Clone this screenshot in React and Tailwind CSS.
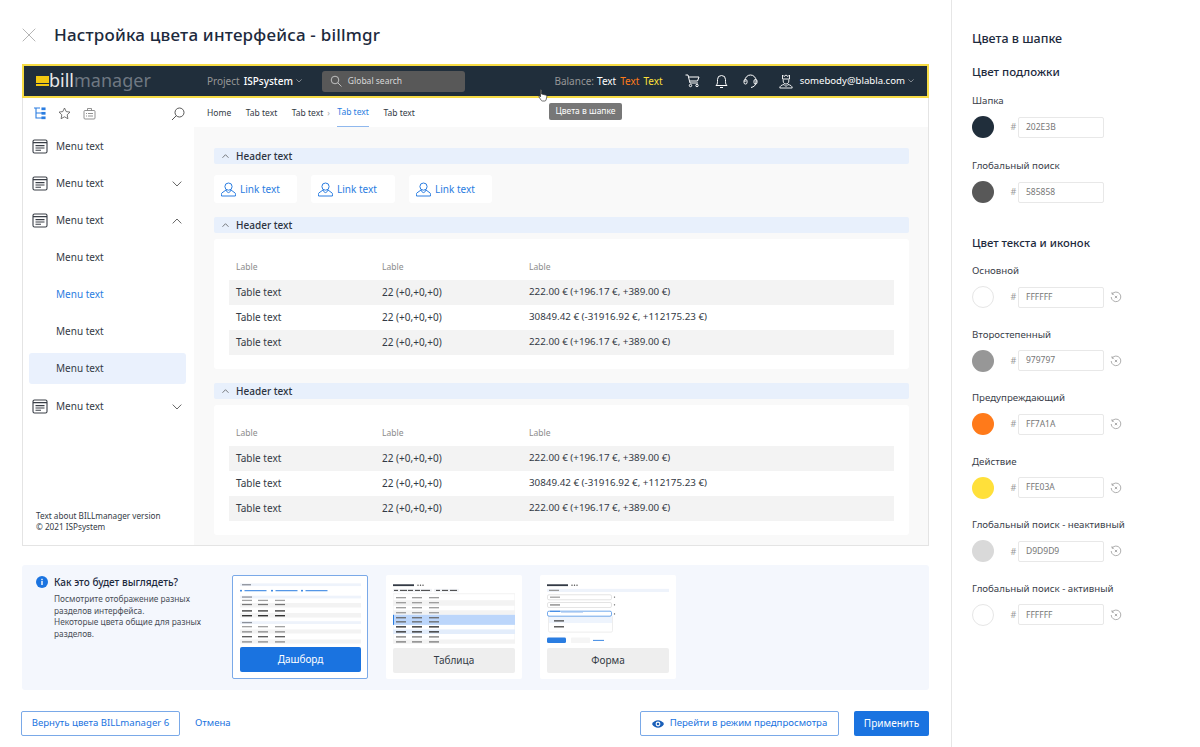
import React from "react";

const F = { fontFamily: '"Noto Sans", "Open Sans", sans-serif' };

const MenuIcon = () => (
  <svg width="16" height="15" viewBox="0 0 16 15" fill="none" stroke="#3a3f47" strokeWidth="1.1" className="shrink-0">
    <rect x="1" y="1" width="14" height="13" rx="1.5" />
    <path d="M1 3.6h14M3.5 6.6h9M3.5 9h9M3.5 11.2h5.5" />
  </svg>
);
const Chev = ({ up, c = "#555", w = 10 }) => (
  <svg width={w} height={w * 0.6} viewBox="0 0 10 6" fill="none" stroke={c} strokeWidth="0.9" className="shrink-0">
    <path d={up ? "M.7 5.4 5 1l4.3 4.4" : "M.7.6 5 5l4.3-4.4"} />
  </svg>
);
const UserIcon = () => (
  <svg width="15" height="15" viewBox="0 0 15 15" fill="none" stroke="#2a7de1" strokeWidth="1" className="shrink-0">
    <circle cx="7.5" cy="4.6" r="3.6" />
    <path d="M5 8 .8 11c-.4.4-.4 1-.3 3h13.900c.2-2 .1-2.600-.3-3L10 8c-.6 1.500-1.500 2.600-2.500 2.600S5.600 9.500 5 8Z" />
  </svg>
);
const Reset = () => (
  <svg width="12" height="12" viewBox="0 0 12 12" fill="none" stroke="#9a9a9a" strokeWidth="0.8" className="shrink-0">
    <path d="M2 3.200A4.800 4.800 0 1 1 1.200 6M2 1.200v2h2M4.800 4.800l2.400 2.400M7.200 4.800 4.800 7.200" />
  </svg>
);

const Menu = ({ chev, up, children }) => (
  <div className="h-[37px] flex items-center pl-[9px] pr-[12px] gap-[8px]">
    <MenuIcon />
    <span className="flex-1 text-[10px] text-[#333a45]">{children}</span>
    {chev && <Chev up={up} />}
  </div>
);
const Sub = ({ children, blue, active }) => (
  <div className="h-[37px] py-[3px] pl-[6px] pr-[8px]">
    <div className={`h-[31px] flex items-center pl-[27px] rounded-[3px] text-[10px] ${blue ? "text-[#2a7de1]" : "text-[#333a45]"} ${active ? "bg-[#eaf1fd]" : ""}`}>
      {children}
    </div>
  </div>
);

const Head = ({ children }) => (
  <div className="h-[16px] bg-[#e8f0fc] rounded-[2px] flex items-center pl-[8px] gap-[7px] text-[10px] font-medium text-[#2c3340]">
    <Chev up c="#333" w={7} />
    {children}
  </div>
);
const LinkCard = ({ w }) => (
  <div className="h-[28px] bg-white rounded-[3px] flex items-center pl-[7px] gap-[4px] text-[10px] text-[#2a7de1]" style={{ width: w }}>
    <UserIcon />
    Link text
  </div>
);
const Row = ({ a, b, c, gray }) => (
  <div className={`h-[25px] flex items-center pl-[7px] text-[10px] text-[#333a45] ${gray ? "bg-[#f3f3f3]" : ""}`}>
    <span className="w-[146px]">{a}</span>
    <span className="w-[147px]">{b}</span>
    <span className="text-[9.800px]">{c}</span>
  </div>
);
const TableCard = () => (
  <div className="bg-white rounded-[3px] h-[130px] mt-[6px] px-[15px] pt-[21px]">
    <div className="h-[20px] flex items-start pl-[7px] text-[8.500px] leading-[14px] text-[#8b8b8b]">
      <span className="w-[146px]">Lable</span>
      <span className="w-[147px]">Lable</span>
      <span>Lable</span>
    </div>
    <Row gray a="Table text" b="22 (+0,+0,+0)" c="222.00 € (+196.17 €, +389.00 €)" />
    <Row a="Table text" b="22 (+0,+0,+0)" c="30849.42 € (-31916.92 €, +112175.23 €)" />
    <Row gray a="Table text" b="22 (+0,+0,+0)" c="222.00 € (+196.17 €, +389.00 €)" />
  </div>
);

const Swatch = ({ label, color, value, reset, border, tall }) => (
  <div className={tall ? "h-[65px]" : "h-[63.600px]"}>
    <div className="text-[9.700px] leading-[14px] text-[#3a404a]">{label}</div>
    <div className="flex items-center mt-[8px]">
      <span className={`w-[22px] h-[22px] rounded-full shrink-0 ${border ? "border border-[#e6e6e6]" : ""}`} style={{ background: color }} />
      <span className="ml-[15px] w-[9px] text-center text-[9px] text-[#9a9a9a]">#</span>
      <div className="w-[86px] h-[21px] rounded-[2px] border border-[#e8e8e8] flex items-center pl-[7px] text-[8.500px] text-[#777]">{value}</div>
      {reset && <span className="ml-[6px] flex"><Reset /></span>}
    </div>
  </div>
);

const lines3 = (y, c) => [3, 19, 36].map((x) => <rect key={x + "-" + y} x={x} y={y} width="10" height="1.400" fill={c} />);
const lines3d = (y, c) => [2, 18, 35].map((x) => <rect key={x + "-" + y} x={x} y={y} width="10" height="1.400" fill={c} />);
const Dots = () => (
  <g>
    <rect x="0" y="2.500" width="21" height="2" fill="#333a45" />
    <circle cx="25" cy="3.500" r=".7" fill="#333" /><circle cx="27.500" cy="3.500" r=".7" fill="#333" /><circle cx="30" cy="3.500" r=".7" fill="#333" />
  </g>
);

const ThumbDash = () => (
  <svg width="121" height="62" viewBox="0 0 121 68" preserveAspectRatio="none" className="block">
    <rect x="0" y="1.500" width="121" height="3" fill="#eef3fb" /><rect x="2" y="2.300" width="9" height="1.400" fill="#8c919a" />
    {[[1, 22], [32, 22], [62, 22]].map(([x, w]) => (
      <g key={x}><circle cx={x} cy="9.500" r="1" fill="#2a7de1" /><rect x={x + 3.5} y="9" width={w} height="1.100" fill="#2a7de1" /></g>
    ))}
    <rect x="0" y="15" width="121" height="3" fill="#eef3fb" /><rect x="2" y="15.800" width="10" height="1.400" fill="#8c919a" />
    <rect y="23" width="121" height="5" fill="#f3f3f3" /><rect y="34" width="121" height="5" fill="#f3f3f3" />
    {lines3d(19.500, "#a0a0a0")}{lines3d(24, "#777")}{lines3d(31, "#333")}{lines3d(36.300, "#222")}
    <rect x="0" y="43" width="121" height="3" fill="#eef3fb" /><rect x="2" y="43.800" width="10" height="1.400" fill="#8c919a" />
    <rect y="52" width="121" height="4.500" fill="#f3f3f3" /><rect y="63" width="121" height="4.500" fill="#f3f3f3" />
    {lines3d(48.300, "#a0a0a0")}{lines3d(54, "#888")}{lines3d(59.300, "#555")}{lines3d(65, "#888")}
  </svg>
);
const ThumbTable = () => (
  <svg width="122" height="62" viewBox="0 0 122 68" preserveAspectRatio="none" className="block">
    <Dots />
    <rect x="0" y="7.500" width="39" height="3.500" fill="#f1f3f6" /><rect x="41" y="7.500" width="25" height="3.500" fill="#f1f3f6" />
    <path d="M1 9.200h4M7 9.200h7M15 9.200h5M22 9.200h5M28 9.200h9M43 9.200h4M49 9.200h6M57 9.200h7" stroke="#333" strokeWidth="1" />
    <rect y="13" width="122" height="54" fill="#fff" stroke="#e8e8e8" strokeWidth=".6" />
    <rect y="20" width="122" height="6" fill="#f3f3f3" /><rect y="31" width="122" height="5" fill="#f3f3f3" />
    <rect y="36" width="122" height="11" fill="#bcd6fb" />
    <rect y="52" width="122" height="5" fill="#e3edfb" /><rect y="63" width="122" height="4" fill="#f3f3f3" />
    <rect y="36" width="1" height="11" fill="#2a7de1" />
    {[16.500, 22, 27.500, 33].map((y) => <g key={y}>{lines3(y, "#999")}</g>)}
    {[38.500, 43].map((y) => <g key={y}>{lines3(y, "#666")}</g>)}
    {[48.500, 54].map((y) => <g key={y}>{lines3(y, "#222")}</g>)}
    {[59.500, 65].map((y) => <g key={y}>{lines3(y, "#777")}</g>)}
  </svg>
);
const ThumbForm = () => (
  <svg width="122" height="62" viewBox="0 0 122 68" preserveAspectRatio="none" className="block">
    <Dots />
    <rect x="0" y="7.500" width="122" height="3.500" fill="#eef3fb" /><rect x="2" y="8.500" width="10" height="1.400" fill="#999" />
    <rect x=".5" y="14" width="64" height="5.500" rx="1.500" fill="#fff" stroke="#cfcfcf" strokeWidth=".6" /><rect x="3" y="16" width="10" height="1.300" fill="#999" />
    <rect x=".5" y="22.500" width="64" height="5.500" rx="1.500" fill="#fff" stroke="#cfcfcf" strokeWidth=".6" /><rect x="3" y="24.500" width="10" height="1.300" fill="#777" />
    <circle cx="67.500" cy="16.500" r=".7" fill="#555" /><circle cx="67.500" cy="25" r=".7" fill="#555" /><circle cx="67.500" cy="35" r=".7" fill="#555" />
    <rect x="1.500" y="37" width="64" height="18" rx="1.500" fill="#fff" stroke="#ececec" strokeWidth="1" />
    <rect x="2" y="38" width="63" height="7" fill="#eef4fd" />
    <rect x="7" y="42" width="10" height="1.300" fill="#333" /><rect x="7" y="48.500" width="10" height="1.300" fill="#333" />
    <rect x=".5" y="32" width="64" height="5.500" rx="1.500" fill="#fff" stroke="#2a7de1" strokeWidth=".7" />
    <rect x="3" y="31.600" width="10" height="1" fill="#2a7de1" /><rect x="14" y="32.800" width="22" height=".8" fill="#a8c6f0" />
    <rect x="0" y="61" width="19" height="6" rx="1.500" fill="#2a7de1" /><rect x="24" y="61" width="19" height="6" rx="1" fill="#f5f5f5" /><rect x="46" y="63.500" width="11" height="1" fill="#2a7de1" />
  </svg>
);

const Thumb = ({ label, active, children }) => (
  <div className={`w-[136px] h-[104px] bg-white rounded-[2px] flex flex-col pb-[6px] ${active ? "border border-[#7aa9e8] pl-[7px] pr-[6px] pt-[6px] pb-[5px]" : "p-[7px] pb-[6px]"}`}>
    <div className="h-[62px] overflow-hidden">{children}</div>
    <div className={`mt-auto h-[25px] rounded-[2px] flex items-center justify-center text-[10px] ${active ? "bg-[#1a73e0] text-white" : "bg-[#eeeeee] text-[#333a45]"}`}>{label}</div>
  </div>
);

export default function App() {
  return (
    <div className="w-[1200px] h-[747px] overflow-hidden flex bg-white relative" style={F}>
      <div className="w-[952px] border-r border-[#e6e6e6] pl-[22px] pr-[22px] flex flex-col shrink-0">
        <div className="h-[64px] flex items-center pt-[6px]">
          <svg width="14" height="14" viewBox="0 0 14 14" stroke="#b5b5b5" strokeWidth="1" fill="none"><path d="M.7.7l12.600 12.600M13.300.7.7 13.300" /></svg>
          <h1 className="ml-[18px] text-[17px] font-medium text-[#1d2a3d] tracking-[0.2px]">Настройка цвета интерфейса - billmgr</h1>
        </div>

        <div className="h-[482px] border border-[#e4e4e4] border-t-0 flex flex-col relative">
          <div className="h-[34px] -ml-[1px] -mr-[1px] border-2 border-[#f7dc45] bg-[#202e3b] flex items-center shrink-0 text-[10px]">
            <span className="ml-[12px] w-[13px] h-[10px] flex flex-col justify-between shrink-0">
              <span className="h-[7px] bg-[#f2c811]" /><span className="h-[2px] bg-[#f2c811]" />
            </span>
            <span className="w-[102px] text-[18px] leading-none -mt-[2px]"><span className="text-[#e8e8e8]">bill</span><span className="text-[#6f7882]">manager</span></span>
            <span className="ml-[56px] text-[#979797]">Project</span>
            <span className="ml-[4px] text-white font-medium">ISPsystem</span>
            <span className="ml-[3px]"><Chev c="#ddd" w={6} /></span>
            <div className="ml-[20px] w-[143px] h-[21px] rounded-[3px] bg-[#585858] flex items-center pl-[8px] gap-[6px] text-[8.500px] text-[#d9d9d9]">
              <svg width="12" height="12" viewBox="0 0 12 12" fill="none" stroke="#d9d9d9" strokeWidth=".8"><circle cx="5" cy="5" r="3.800" /><path d="m8 8 3.500 3.500" /></svg>
              Global search
            </div>
            <span className="ml-auto text-[#979797]">Balance:</span>
            <span className="ml-[3px] text-white">Text</span>
            <span className="ml-[4px] text-[#ff7a1a]">Text</span>
            <span className="ml-[4px] text-[#ffe03a]">Text</span>
            <svg className="ml-[22px]" width="15" height="14" viewBox="0 0 15 14" fill="none" stroke="#fff" strokeWidth="1"><path d="M.5 1h2.500l2 8h8M3.500 3h10.500l-1.500 4H5" /><circle cx="5.500" cy="11.500" r="1.200" /><circle cx="12" cy="11.500" r="1.200" /></svg>
            <svg className="ml-[15px]" width="13" height="15" viewBox="0 0 13 15" fill="none" stroke="#fff" strokeWidth="1"><path d="M1 11.500c1.200-1 1.500-2 1.500-4V5.500a4 4 0 0 1 8 0v2c0 2 .3 3 1.500 4ZM5 13.500h3" /></svg>
            <svg className="ml-[15px]" width="15" height="15" viewBox="0 0 15 15" fill="none" stroke="#fff" strokeWidth="1"><path d="M2 8V6.500a5.500 5.500 0 0 1 11 0V8c0 3-2 5-5 5.500" /><rect x="1" y="5.500" width="3" height="4.500" rx="1.400" /><rect x="11" y="5.500" width="3" height="4.500" rx="1.400" /></svg>
            <svg className="ml-[21px]" width="14" height="15" viewBox="0 0 14 15" fill="none" stroke="#fff" strokeWidth=".9"><path d="M3.500 1 5 2.500 7 1l2 1.500L10.500 1v4h-7ZM4.200 5.500v1.500c0 2 1.200 3 2.800 3s2.800-1 2.800-3V5.500M.8 14c0-2 1.700-3 4.200-3.500l2 2 2-2c2.500.5 4.200 1.500 4.200 3.500Z" /></svg>
            <span className="ml-[7px] text-white text-[9.600px]">somebody@blabla.com</span>
            <span className="ml-[3px] mr-[13px]"><Chev c="#ddd" w={6} /></span>
          </div>

          <div className="flex flex-1 min-h-0">
            <aside className="w-[171px] shrink-0 flex flex-col bg-white">
              <div className="h-[29px] mt-[1px] flex items-center pl-[10px] pr-[9px]">
                <svg width="13" height="14" viewBox="0 0 13 14" fill="none" stroke="#2a7de1" strokeWidth="1.100"><path d="M1 1h6M3 1v10h6M3 6h6" /><rect x="9" y="1" width="3" height="1.600" fill="#2a7de1" /><rect x="9" y="5.500" width="3" height="1.600" fill="#2a7de1" /><rect x="9" y="10" width="3" height="1.600" fill="#2a7de1" /></svg>
                <svg className="ml-[12px]" width="13" height="13" viewBox="0 0 13 13" fill="none" stroke="#555" strokeWidth=".8"><path d="m6.500 1 1.700 3.600 3.800.5-2.800 2.700.7 3.900-3.400-1.900-3.400 1.900.7-3.900L1 5.100l3.800-.5Z" /></svg>
                <svg className="ml-[12px]" width="13" height="13" viewBox="0 0 13 13" fill="none" stroke="#777" strokeWidth=".8"><rect x="1" y="3.500" width="11" height="8.500" rx="1" /><path d="M4.500 3.500V1.500h4v2M3 6.500h1M5 6.500h5M3 9h1M5 9h5" /></svg>
                <svg className="ml-auto" width="14" height="14" viewBox="0 0 14 14" fill="none" stroke="#444" strokeWidth=".9"><circle cx="8.500" cy="5.500" r="4.500" /><path d="M5.300 8.700 1 13" /></svg>
              </div>
              <div>
                <Menu>Menu text</Menu>
                <Menu chev>Menu text</Menu>
                <Menu chev up>Menu text</Menu>
                <Sub>Menu text</Sub>
                <Sub blue>Menu text</Sub>
                <Sub>Menu text</Sub>
                <Sub active>Menu text</Sub>
                <div className="h-px" />
                <Menu chev>Menu text</Menu>
              </div>
              <div className="mt-auto pl-[13px] pb-[13px] text-[8.200px] leading-[10.500px] text-[#333a45]">
                Text about BILLmanager version<br />© 2021 ISPsystem
              </div>
            </aside>
            <main className="flex-1 min-w-0 bg-[#f9f9f9] flex flex-col">
              <div className="h-[29px] bg-white flex items-stretch pl-[13px] pt-[1px] gap-[14.500px] text-[8.500px] text-[#333a45] shrink-0">
                <span className="flex items-center">Home</span>
                <span className="flex items-center">Tab text</span>
                <span className="flex items-center">Tab text<span className="ml-[4px] text-[#aaa]">›</span></span>
                <span className="flex items-center text-[#2a7de1] border-b border-[#8fb8ee] -ml-[7px]">Tab text</span>
                <span className="flex items-center">Tab text</span>
              </div>
              <div className="pl-[20px] pr-[19px] pt-[21px]">
                <Head>Header text</Head>
                <div className="flex gap-[14px] mt-[11px] mb-[14px]">
                  <LinkCard w={83} /><LinkCard w={84} /><LinkCard w={83} />
                </div>
                <Head>Header text</Head>
                <TableCard />
                <div className="h-[14px]" />
                <Head>Header text</Head>
                <TableCard />
              </div>
            </main>
          </div>

          <div className="absolute left-[526px] top-[39px] w-[73px] h-[17px] rounded-[2px] bg-[#777] text-white text-[8.500px] flex items-center justify-center">Цвета в шапке</div>
          <svg className="absolute left-[515px] top-[25px]" width="10" height="13" viewBox="0 0 10 13" fill="#fff" stroke="#333" strokeWidth=".7"><path d="M2.500 1c.5-.4 1 0 1 .5V5l4 1c1 .3 1.500 1 1.300 2L8 11c-.2.6-.6 1-1.200 1H4.500c-.5 0-.9-.2-1.200-.6L1 8c-.4-.6.3-1.200.8-.8L2.500 8Z" /></svg>
        </div>

        <div className="mt-[19px] h-[125px] bg-[#f4f7fd] rounded-[3px] flex pl-[14px] pt-[10px]">
          <div className="w-[196px] shrink-0">
            <div className="flex items-center h-[14px]">
              <svg width="12" height="12" viewBox="0 0 12 12"><circle cx="6" cy="6" r="6" fill="#1a73e0" /><rect x="5.300" y="5" width="1.400" height="4" fill="#fff" /><rect x="5.300" y="2.800" width="1.400" height="1.400" fill="#fff" /></svg>
              <span className="ml-[6px] text-[10px] font-medium text-[#1d2a3d] whitespace-nowrap">Как это будет выглядеть?</span>
            </div>
            <p className="mt-[4px] ml-[18px] w-[155px] text-[8.300px] leading-[11.700px] text-[#4a4f58]">
              Посмотрите отображение разных разделов интерфейса.<br />Некоторые цвета общие для разных разделов.
            </p>
          </div>
          <div className="flex gap-[18px]">
            <Thumb active label="Дашборд"><ThumbDash /></Thumb>
            <Thumb label="Таблица"><ThumbTable /></Thumb>
            <Thumb label="Форма"><ThumbForm /></Thumb>
          </div>
        </div>

        <div className="mt-[21px] flex items-center h-[25px] -ml-[1px] text-[9.600px]">
          <button className="w-[159px] h-[25px] rounded-[2px] border border-[#7aa9e8] text-[#1a73e0] bg-white">Вернуть цвета BILLmanager 6</button>
          <span className="ml-[15px] text-[#1a73e0]">Отмена</span>
          <button className="ml-auto w-[199px] h-[25px] rounded-[2px] border border-[#7aa9e8] text-[#1a73e0] bg-white flex items-center justify-center gap-[6px]">
            <svg width="12" height="8" viewBox="0 0 12 8"><path d="M0 4c1.500-2.500 3.500-3.700 6-3.700S10.500 1.500 12 4c-1.500 2.500-3.500 3.700-6 3.700S1.500 6.500 0 4Z" fill="#1a5fb8" /><circle cx="6" cy="4" r="2.400" fill="#fff" /><circle cx="6" cy="4" r="1.300" fill="#1a5fb8" /></svg>
            Перейти в режим предпросмотра
          </button>
          <button className="ml-[15px] w-[75px] h-[25px] rounded-[2px] bg-[#1a73e0] text-white text-[10px]">Применить</button>
        </div>
      </div>

      <aside className="flex-1 pl-[20px] pt-[31px]">
        <h2 className="text-[12.500px] leading-[16px] font-medium text-[#1d2a3d]">Цвета в шапке</h2>
        <h3 className="mt-[17px] text-[11.500px] leading-[16px] font-medium text-[#1d2a3d]">Цвет подложки</h3>
        <div className="mt-[14px]">
          <Swatch tall label="Шапка" color="#202e3b" value="202E3B" />
          <Swatch tall label="Глобальный поиск" color="#585858" value="585858" />
        </div>
        <h3 className="mt-[11px] text-[11.300px] leading-[16px] font-medium text-[#1d2a3d]">Цвет текста и иконок</h3>
        <div className="mt-[13px]">
          <Swatch label="Основной" color="#ffffff" border value="FFFFFF" reset />
          <Swatch label="Второстепенный" color="#979797" value="979797" reset />
          <Swatch label="Предупреждающий" color="#ff7a1a" value="FF7A1A" reset />
          <Swatch label="Действие" color="#ffe03a" value="FFE03A" reset />
          <Swatch label="Глобальный поиск - неактивный" color="#d9d9d9" value="D9D9D9" reset />
          <Swatch label="Глобальный поиск - активный" color="#ffffff" border value="FFFFFF" reset />
        </div>
      </aside>
    </div>
  );
}
